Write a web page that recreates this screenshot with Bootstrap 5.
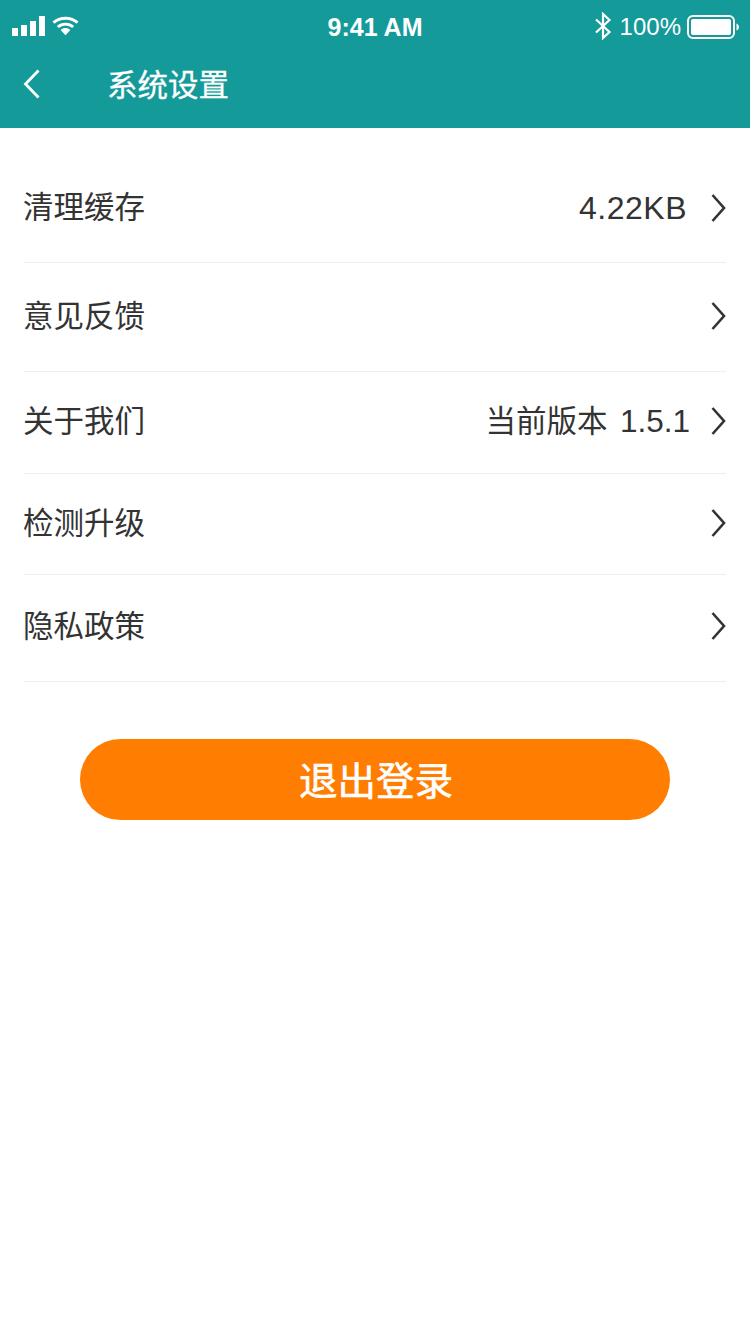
<!DOCTYPE html>
<html lang="zh-CN">
<head>
  <meta charset="UTF-8">
  <title>系统设置</title>
  <link href="https://cdn.jsdelivr.net/npm/bootstrap@5.3.0/dist/css/bootstrap.min.css" rel="stylesheet">
  <style>
    body {
      font-family: "Liberation Sans", "Noto Sans CJK SC", sans-serif;
      color: #333;
      background: #fff;
      width: 750px;
    }
    /* header */
    .app-head { background: #159a9a; height: 128px; color: #fff; }
    .status-bar { height: 40px; padding: 9px 11px 0 12px; position: relative; font-size: 24px; line-height: 36px; }
    .status-time { position: absolute; left: 0; right: 0; top: 9px; text-align: center; font-weight: 700; font-size: 25px; }
    .ico-bars { margin-top: 7px; }
    .ico-wifi { margin: 7px 0 0 -2px; }
    .ico-bt { margin: 3px 8px 0 0; }
    .ico-batt { margin-top: 6px; }
    .pct { margin-right: 6px; }
    .title-bar { height: 88px; padding: 0 23px; }
    .title-bar h1 { font-size: 30.5px; font-weight: 400; margin: 2px 0 0 66px; line-height: 40px; -webkit-text-stroke: .3px #fff; }
    /* rows */
    .set-list { margin: 0 24px; }
    .set-row { border-bottom: 1px solid #eee; font-size: 30.5px; }
    .set-lab { margin: 2px 0 0 -1px; }
    .r1 .set-lab { margin-top: 1px; }
    .set-val { margin-right: 24px; }
    .set-val.ver { margin: 2px 21px 0 0; }
    .num-a { font-size: 32px; letter-spacing: .5px; }
    .num-b { font-size: 31.5px; margin-left: 4px; }
    .r1 { height: 135px; padding-top: 56px; }
    .r2 { height: 109px; padding-bottom: 2px; }
    .r3 { height: 102px; padding-bottom: 3px; }
    .r4 { height: 101px; padding-bottom: 3px; }
    .r5 { height: 107px; padding-bottom: 5px; }
    .set-chev { flex: none; }
    /* logout */
    .logout-btn {
      width: 590px; height: 81px; margin: 57px auto 0; display: block;
      background: #ff7d00; border-radius: 41px; color: #fff;
      font-size: 38.5px; font-weight: 400; line-height: 81px; padding: 2px 0 0 2px; border: 0;
      -webkit-text-stroke: .6px #fff;
    }
    .logout-btn:hover { background: #ff7d00; color: #fff; }
  </style>
</head>
<body>
  <div class="app-head">
    <div class="status-bar d-flex justify-content-between">
      <div class="d-flex align-items-start gap-2">
        <svg class="ico-bars" width="34" height="20" viewBox="0 0 34 20" fill="#fff">
          <rect x="0" y="12" width="6" height="8"/><rect x="9" y="9" width="6" height="11"/><rect x="18" y="5" width="6" height="15"/><rect x="27" y="0" width="6" height="20"/>
        </svg>
        <svg class="ico-wifi" width="27" height="20" viewBox="0 0 28 20">
          <path d="M1.500 6.500C8.500.5 19.500.5 26.500 6.500" fill="none" stroke="#fff" stroke-width="3"/>
          <path d="M6 11C10.500 7 17.500 7 22 11" fill="none" stroke="#fff" stroke-width="3"/>
          <path d="M9 14.200C12 11.500 16 11.500 19 14.200L14 19.500Z" fill="#fff"/>
        </svg>
      </div>
      <div class="status-time">9:41 AM</div>
      <div class="d-flex align-items-start">
        <svg class="ico-bt" width="18" height="28" viewBox="0 0 18 28">
          <path d="M2 7.500L15.500 20 9 26V2l6.500 6L2 20.500" fill="none" stroke="#fff" stroke-width="2.200"/>
        </svg>
        <span class="pct">100%</span>
        <svg class="ico-batt" width="52" height="24" viewBox="0 0 52 24">
          <rect x="1" y="1" width="46" height="22" rx="5" fill="none" stroke="#fff" stroke-width="2"/>
          <rect x="4" y="4" width="40" height="16" rx="2" fill="#fff"/>
          <path d="M49.500 8.500c1.500.500 2.500 2 2.500 3.500s-1 3-2.500 3.500z" fill="#fff"/>
        </svg>
      </div>
    </div>
    <div class="title-bar d-flex align-items-center">
      <svg width="18" height="30" viewBox="0 0 18 30"><path d="M15.500 1.500L2.500 15l13 13.500" fill="none" stroke="#fff" stroke-width="2.800"/></svg>
      <h1>系统设置</h1>
    </div>
  </div>

  <div class="set-list">
    <div class="set-row r1 d-flex align-items-start justify-content-between">
      <span class="set-lab">清理缓存</span>
      <div class="d-flex align-items-center">
        <span class="set-val num-a">4.22KB</span>
        <svg class="set-chev" width="15" height="28" viewBox="0 0 15 28"><path d="M1.500 1L13 14 1.500 27" fill="none" stroke="#333" stroke-width="2.600"/></svg>
      </div>
    </div>
    <div class="set-row r2 d-flex align-items-center justify-content-between">
      <span class="set-lab">意见反馈</span>
      <svg class="set-chev" width="15" height="28" viewBox="0 0 15 28"><path d="M1.500 1L13 14 1.500 27" fill="none" stroke="#333" stroke-width="2.600"/></svg>
    </div>
    <div class="set-row r3 d-flex align-items-center justify-content-between">
      <span class="set-lab">关于我们</span>
      <div class="d-flex align-items-center">
        <span class="set-val ver">当前版本 <span class="num-b">1.5.1</span></span>
        <svg class="set-chev" width="15" height="28" viewBox="0 0 15 28"><path d="M1.500 1L13 14 1.500 27" fill="none" stroke="#333" stroke-width="2.600"/></svg>
      </div>
    </div>
    <div class="set-row r4 d-flex align-items-center justify-content-between">
      <span class="set-lab">检测升级</span>
      <svg class="set-chev" width="15" height="28" viewBox="0 0 15 28"><path d="M1.500 1L13 14 1.500 27" fill="none" stroke="#333" stroke-width="2.600"/></svg>
    </div>
    <div class="set-row r5 d-flex align-items-center justify-content-between">
      <span class="set-lab">隐私政策</span>
      <svg class="set-chev" width="15" height="28" viewBox="0 0 15 28"><path d="M1.500 1L13 14 1.500 27" fill="none" stroke="#333" stroke-width="2.600"/></svg>
    </div>
  </div>

  <button class="btn logout-btn" type="button">退出登录</button>

  <script src="https://cdn.jsdelivr.net/npm/bootstrap@5.3.0/dist/js/bootstrap.bundle.min.js"></script>
</body>
</html>
